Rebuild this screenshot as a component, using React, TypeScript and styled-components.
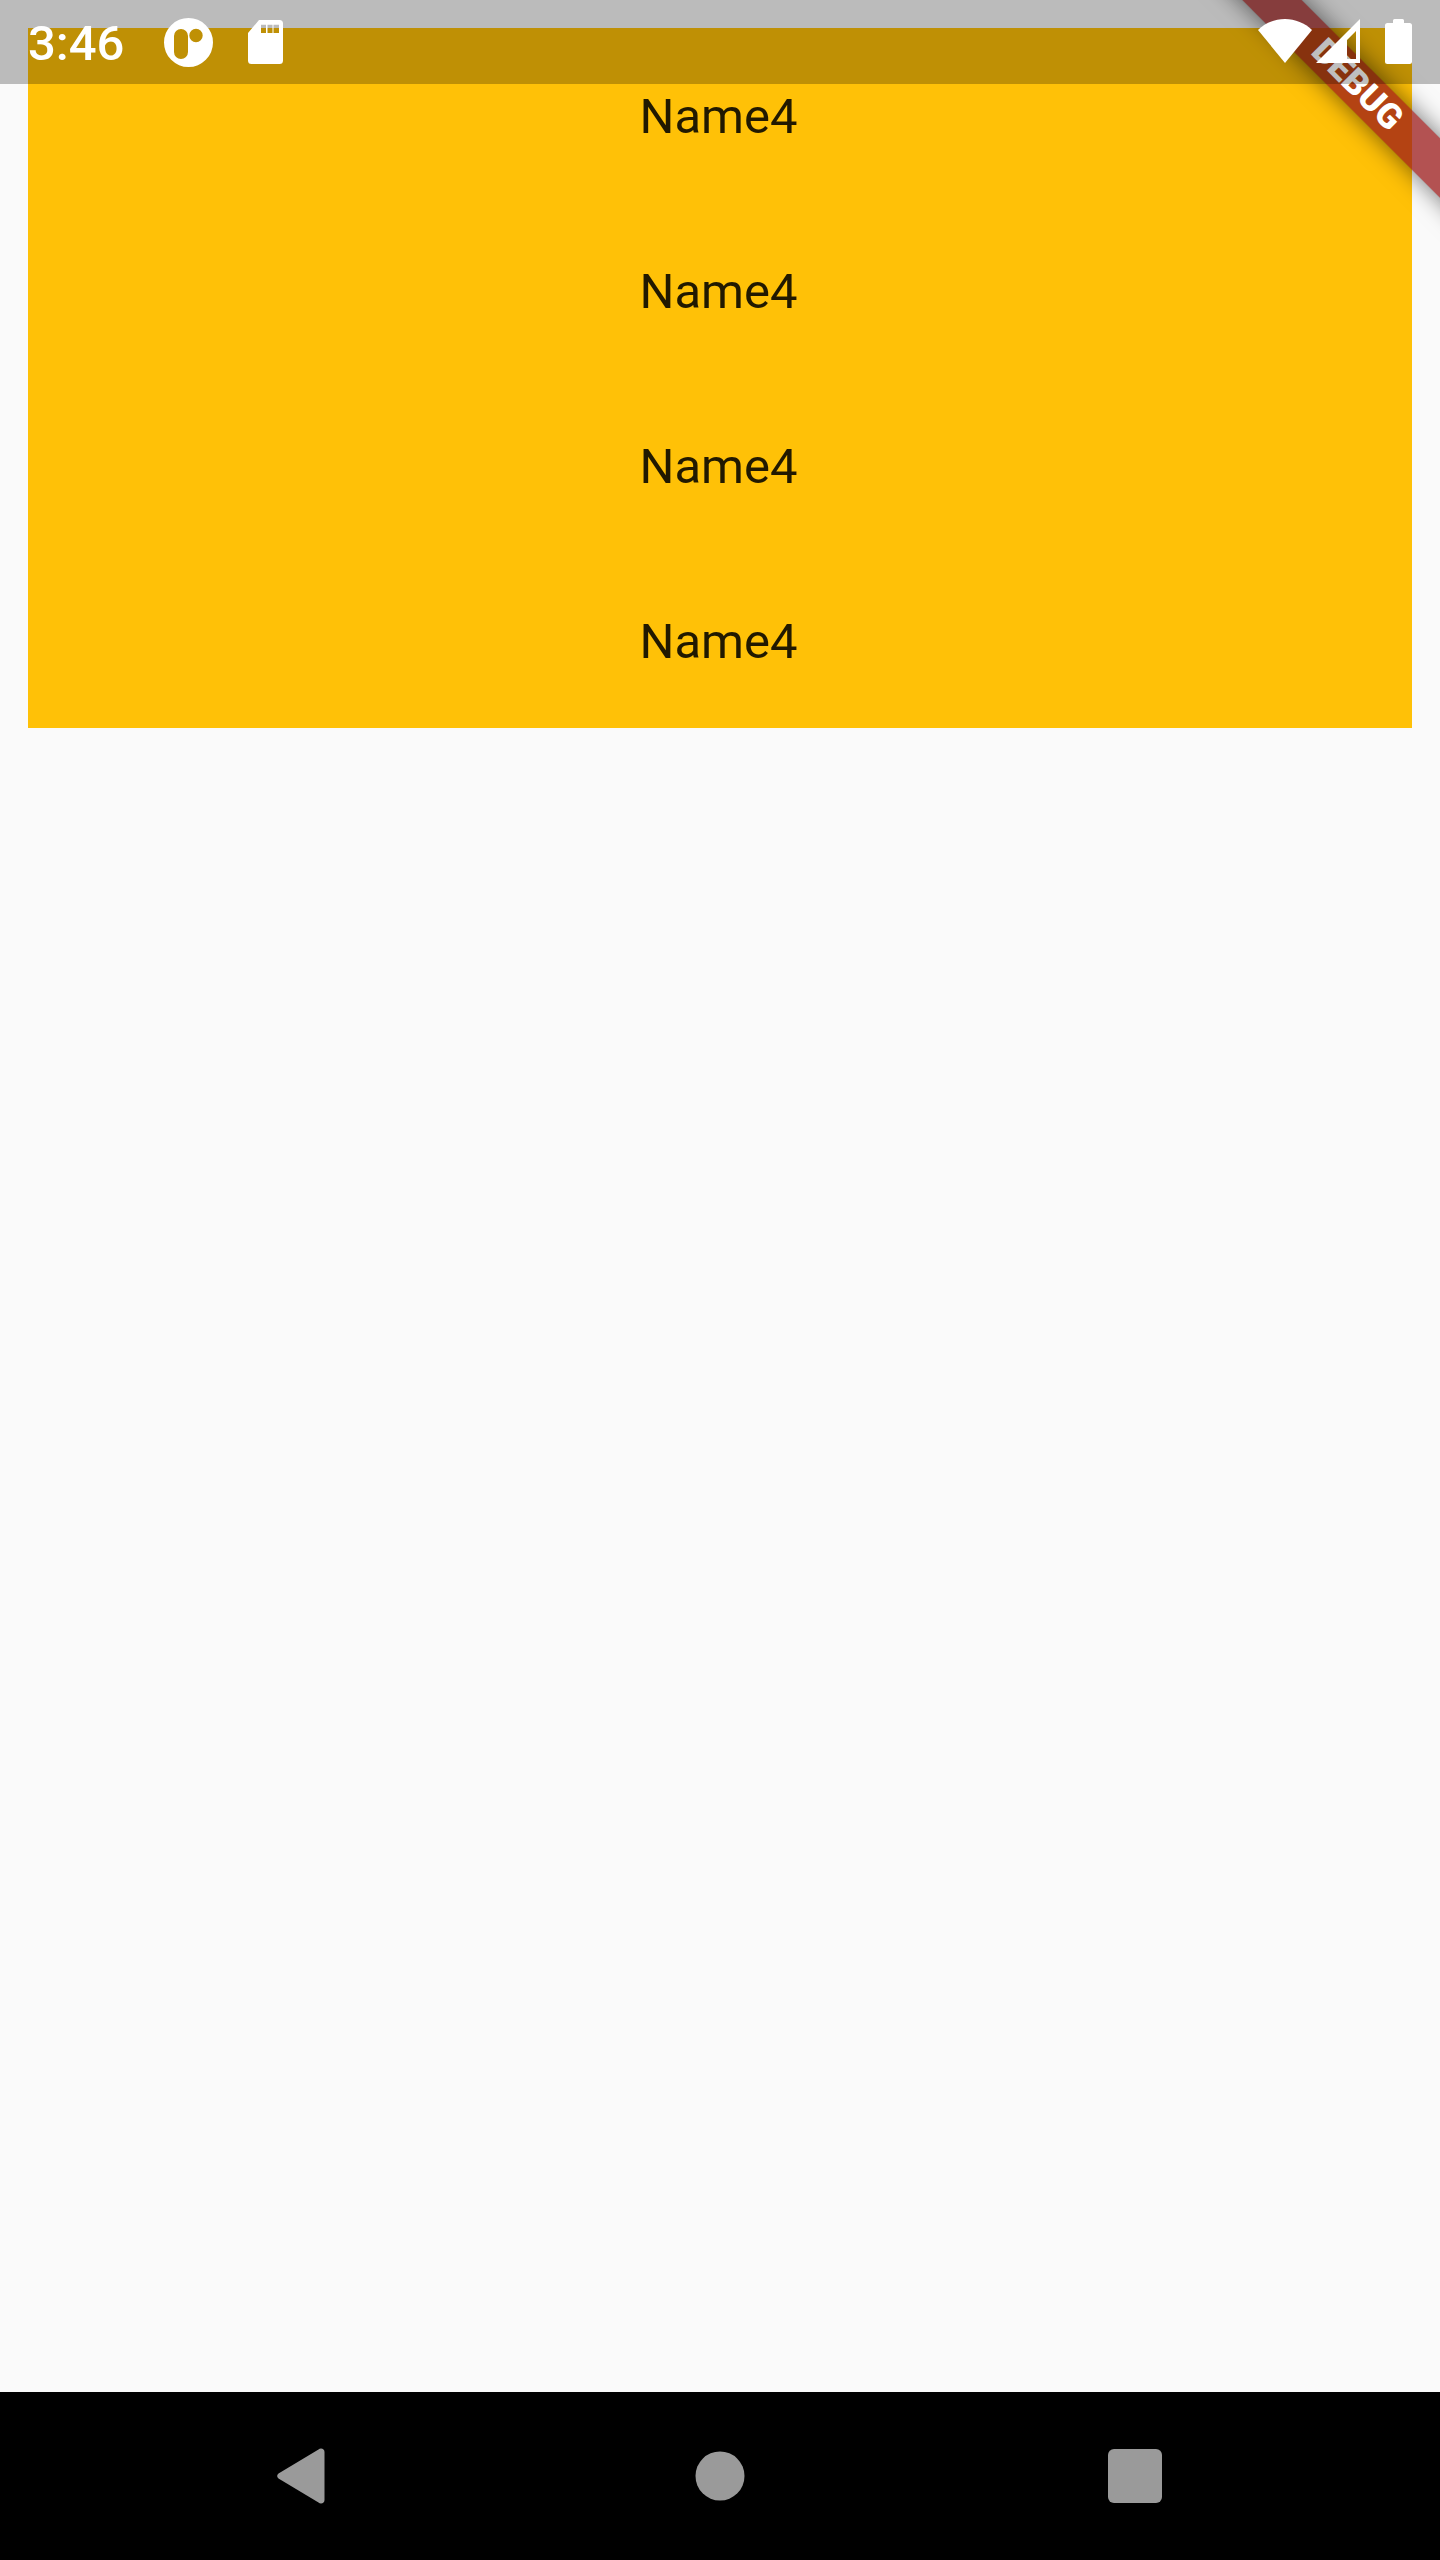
import React, { FC } from 'react';
import styled, { createGlobalStyle } from 'styled-components';

const GlobalStyle = createGlobalStyle`
    html, body {
        margin: 0;
        padding: 0;
        background: #fafafa;
    }
`;

const names = ['Name4', 'Name4', 'Name4', 'Name4'];

const App: FC = () => {
    return (
        <Screen>
            <GlobalStyle />
            <Content>
                <Card>
                    {names.map((name, index) => (
                        <Row key={index}>{name}</Row>
                    ))}
                </Card>
            </Content>
            <NavBar>
                <NavIcon width="56" height="56" viewBox="0 0 56 56">
                    <path d="M44 0.5c2 0 3.500 1.500 3.500 3.500v48c0 2-1.500 3.500-3.500 3.500-1 0-1.800-.4-2.500-1L1.500 30.500c-1.800-1.400-1.800-3.600 0-5l40-24c.7-.6 1.500-1 2.500-1z" />
                </NavIcon>
                <NavIcon width="50" height="50" viewBox="0 0 50 50">
                    <circle cx="25" cy="25" r="24.500" />
                </NavIcon>
                <NavIcon width="54" height="54" viewBox="0 0 54 54">
                    <rect x="0" y="0" width="54" height="54" rx="6" />
                </NavIcon>
            </NavBar>
            <DebugBanner>DEBUG</DebugBanner>
            <StatusBar>
                <StatusLeft>
                    <Clock>3:46</Clock>
                    <CircleIcon width="49" height="49" viewBox="0 0 49 49">
                        <path
                            fillRule="evenodd"
                            d="M24.500 0a24.500 24.500 0 1 0 0 49a24.500 24.500 0 1 0 0-49zM17 11a7 7 0 0 1 7 7v16a7 7 0 0 1-14 0v-16a7 7 0 0 1 7-7zM32 10.800a6.700 6.700 0 1 1 0 13.400a6.700 6.700 0 1 1 0-13.400z"
                        />
                    </CircleIcon>
                    <SdIcon width="35" height="44" viewBox="0 0 35 44">
                        <path
                            fillRule="evenodd"
                            d="M11 0h20.500a3.500 3.500 0 0 1 3.500 3.500v37a3.500 3.500 0 0 1-3.500 3.500h-28a3.500 3.500 0 0 1-3.500-3.500V13zM13 4.700V13h5V4.700zM19.500 4.700V13h5V4.700zM25.500 4.700V13h5.500V4.700z"
                        />
                    </SdIcon>
                </StatusLeft>
                <StatusRight>
                    <svg width="54" height="44" viewBox="0 0 54 44" fill="#fff">
                        <path d="M27 44L0 11C7 4 17 0 27 0s20 4 27 11z" />
                    </svg>
                    <SignalIcon width="45" height="44" viewBox="0 0 45 44">
                        <path
                            fillRule="evenodd"
                            d="M45 0v44H1zM41 12L32 21v19h9z"
                        />
                    </SignalIcon>
                    <BatteryIcon width="27" height="45" viewBox="0 0 27 45">
                        <path d="M8 4V1.500A1.500 1.500 0 0 1 9.500 0h8A1.500 1.500 0 0 1 19 1.500V4h5.500A2.500 2.500 0 0 1 27 6.500v36a2.500 2.500 0 0 1-2.500 2.500h-22A2.500 2.500 0 0 1 0 42.500v-36A2.500 2.500 0 0 1 2.500 4z" />
                    </BatteryIcon>
                </StatusRight>
            </StatusBar>
        </Screen>
    );
};

const Screen = styled.div`
    position: relative;
    width: 1440px;
    height: 2560px;
    overflow: hidden;
    display: flex;
    flex-direction: column;
    background-color: #fafafa;
    font-family: Roboto, "Liberation Sans", sans-serif;
`;

const Content = styled.main`
    flex: 1;
    padding: 28px;
`;

const Card = styled.div`
    background-color: #ffc107;
`;

const Row = styled.div`
    height: 175px;
    box-sizing: border-box;
    padding: 1px 3px 0 0;
    display: flex;
    align-items: center;
    justify-content: center;
    font-size: 49px;
    color: rgba(0, 0, 0, 0.87);
`;

const NavBar = styled.nav`
    height: 168px;
    flex-shrink: 0;
    background-color: #000;
    display: grid;
    grid-template-columns: repeat(3, 415px);
    justify-content: center;
    justify-items: center;
    align-items: center;
`;

const NavIcon = styled.svg`
    fill: #9a9a9a;
    display: block;
`;

const DebugBanner = styled.div`
    position: absolute;
    top: 64px;
    left: 1157px;
    width: 400px;
    height: 42px;
    line-height: 42px;
    text-align: center;
    transform: rotate(45deg);
    background-color: rgba(154, 24, 24, 0.746);
    box-shadow: 0 0 24px rgba(0, 0, 0, 0.55);
    color: #fff;
    font-size: 35px;
    font-weight: 900;
`;

const StatusBar = styled.header`
    position: absolute;
    top: 0;
    left: 0;
    right: 0;
    height: 84px;
    padding: 0 28px;
    box-sizing: border-box;
    background-color: rgba(0, 0, 0, 0.25);
    display: flex;
    align-items: center;
    justify-content: space-between;
`;

const StatusLeft = styled.div`
    display: flex;
    align-items: center;
`;

const StatusRight = styled.div`
    display: flex;
    align-items: center;
    padding-bottom: 2px;
`;

const Clock = styled.span`
    font-size: 49px;
    font-weight: 500;
    color: #fff;
    width: 136px;
    padding-top: 3px;
`;

const CircleIcon = styled.svg`
    fill: #fff;
`;

const SdIcon = styled.svg`
    fill: #fff;
    margin-left: 35px;
`;

const SignalIcon = styled.svg`
    fill: #fff;
    margin-left: 3px;
`;

const BatteryIcon = styled.svg`
    fill: #fff;
    margin-left: 25px;
`;

export default App;
